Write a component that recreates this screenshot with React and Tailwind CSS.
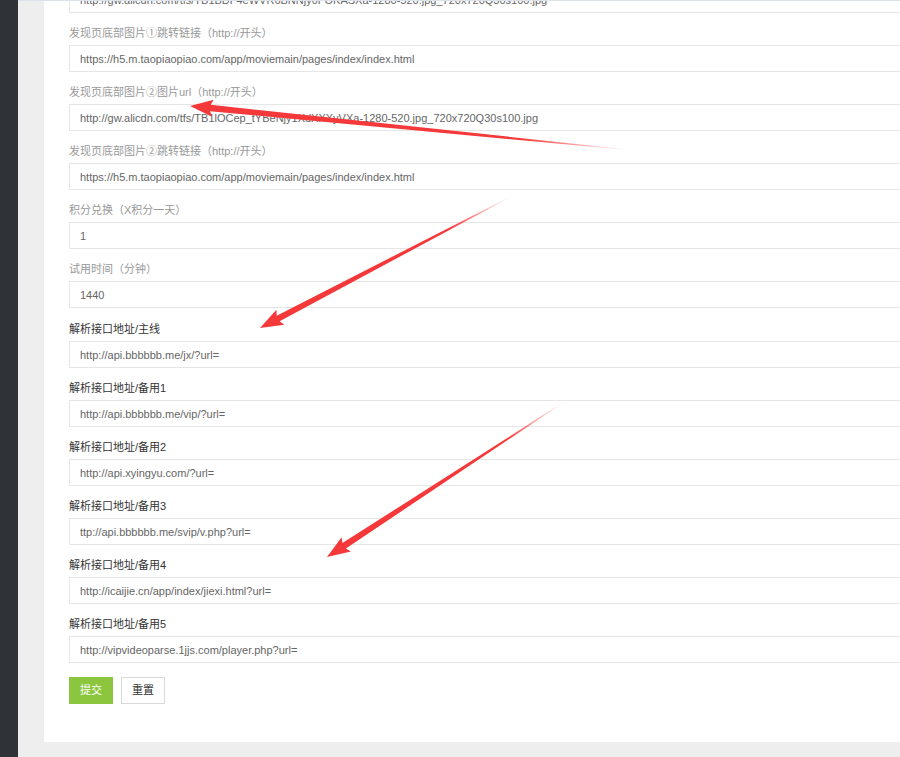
import React from 'react';

const fields = [
  { label: '发现页底部图片①跳转链接（http://开头）', value: 'https://h5.m.taopiaopiao.com/app/moviemain/pages/index/index.html', muted: true },
  { label: '发现页底部图片②图片url（http://开头）', value: 'http://gw.alicdn.com/tfs/TB1lOCep_tYBeNjy1XdXXXyVXa-1280-520.jpg_720x720Q30s100.jpg', muted: true },
  { label: '发现页底部图片②跳转链接（http://开头）', value: 'https://h5.m.taopiaopiao.com/app/moviemain/pages/index/index.html', muted: true },
  { label: '积分兑换（X积分一天）', value: '1', muted: true },
  { label: '试用时间（分钟）', value: '1440', muted: true },
  { label: '解析接口地址/主线', value: 'http://api.bbbbbb.me/jx/?url=' },
  { label: '解析接口地址/备用1', value: 'http://api.bbbbbb.me/vip/?url=' },
  { label: '解析接口地址/备用2', value: 'http://api.xyingyu.com/?url=' },
  { label: '解析接口地址/备用3', value: 'ttp://api.bbbbbb.me/svip/v.php?url=' },
  { label: '解析接口地址/备用4', value: 'http://icaijie.cn/app/index/jiexi.html?url=' },
  { label: '解析接口地址/备用5', value: 'http://vipvideoparse.1jjs.com/player.php?url=' },
];

// annotation arrows: tip x/y, length, angle
const arrows = [
  { id: 'a1', x: 190, y: 106, len: 442, angle: 5.71 },
  { id: 'a2', x: 260, y: 328, len: 283, angle: -27.65 },
  { id: 'a3', x: 327, y: 557, len: 283, angle: -33.18 },
];

const TextInput = ({ value, className = '' }) => (
  <input
    readOnly
    defaultValue={value}
    className={`block w-[880px] h-[27px] border border-[#e6e6e6] bg-white px-[10px] text-[11px] text-[#666] outline-none ${className}`}
  />
);

const Arrows = () => (
  <svg className="absolute inset-0 pointer-events-none" width="900" height="757">
    <defs>
      {arrows.map(a => (
        <linearGradient key={a.id} id={a.id} gradientUnits="userSpaceOnUse" x1="0" y1="0" x2={a.len} y2="0">
          <stop offset="0" stopColor="#f5383a" />
          <stop offset="0.75" stopColor="#f5383a" />
          <stop offset="1" stopColor="#f5383a" stopOpacity="0" />
        </linearGradient>
      ))}
    </defs>
    {arrows.map(a => (
      <path
        key={a.id}
        transform={`translate(${a.x} ${a.y}) rotate(${a.angle})`}
        fill={`url(#${a.id})`}
        d={`M0 0 L23 -8.5 L20.5 -3.2 L${a.len} -0.3 L${a.len} 0.3 L20.5 3.2 L23 8.5 Z`}
      />
    ))}
  </svg>
);

export default function App() {
  return (
    <div
      className="relative flex w-[900px] h-[757px] overflow-hidden bg-[#eeeeee]"
      style={{ fontFamily: '"Liberation Sans", Arial, "Noto Sans CJK SC", sans-serif' }}
    >
      <div className="w-[18px] shrink-0 bg-[#2f3236]" />
      <div className="flex-1 pl-[26px] border-t border-[#dde1ea]">
        <div className="bg-white pl-[25px] pb-[38px] overflow-hidden">
          <TextInput
            className="-mt-[15px]"
            value="http://gw.alicdn.com/tfs/TB1BDF4eWVR6BNNjy0FOKASXa-1280-520.jpg_720x720Q30s100.jpg"
          />
          {fields.map((f, i) => (
            <div key={f.label} className={i === 5 ? 'mt-[11px]' : 'mt-[10px]'}>
              <div className={`h-[20px] leading-[20px] mb-[2px] text-[11px] ${f.muted ? 'text-[#999]' : 'text-[#333]'}`}>
                {f.label}
              </div>
              <TextInput value={f.value} />
            </div>
          ))}
          <div className="flex gap-[8px] mt-[14px]">
            <button className="w-[44px] h-[27px] bg-[#8cc63f] text-white text-[11px]">提交</button>
            <button className="w-[44px] h-[27px] bg-white border border-[#d9d9d9] text-[#333] text-[11px]">重置</button>
          </div>
        </div>
      </div>
      <Arrows />
    </div>
  );
}
